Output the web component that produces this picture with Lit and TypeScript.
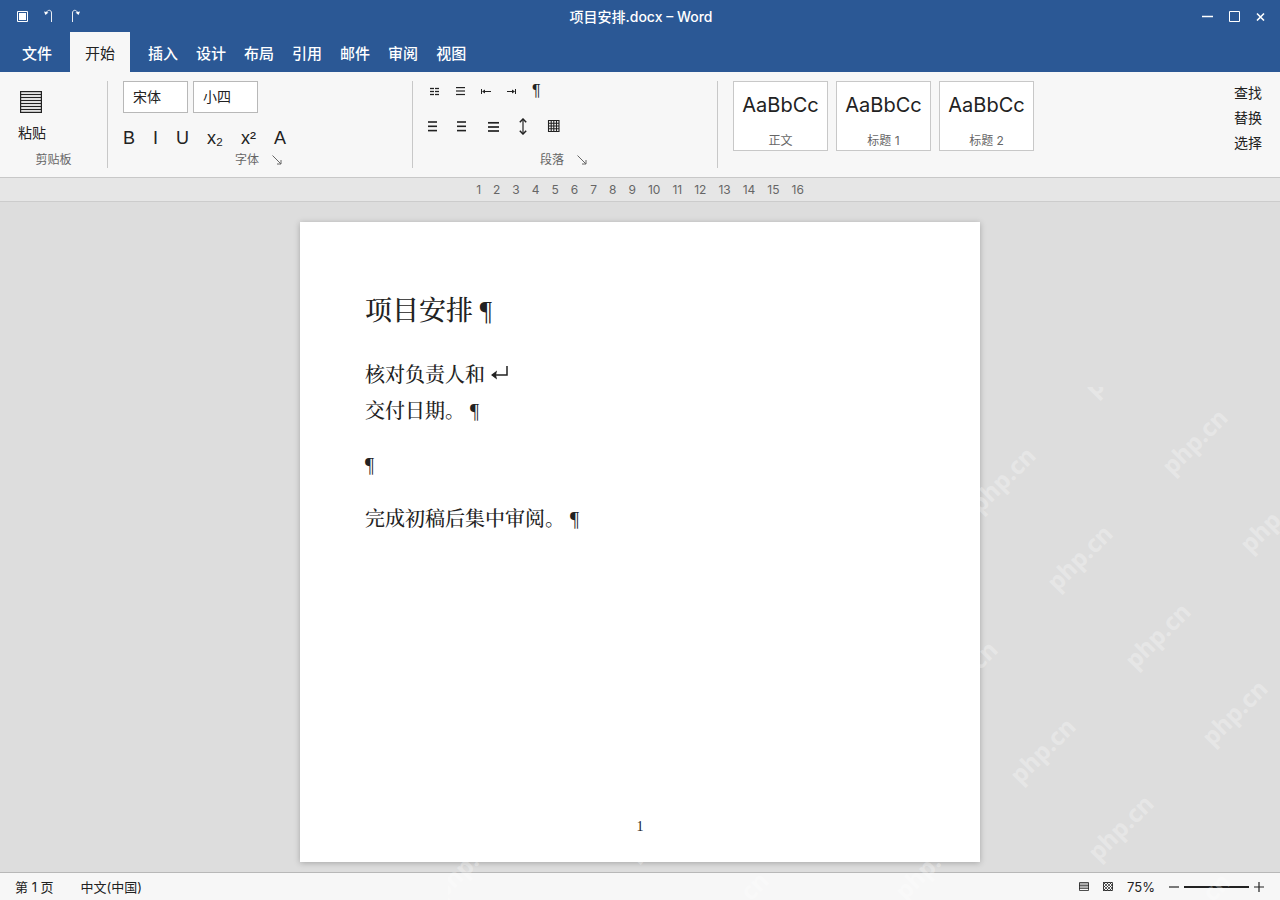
import { LitElement, html, css, svg } from "lit";
import { customElement, state } from "lit/decorators.js";

const TABS = ["文件", "开始", "插入", "设计", "布局", "引用", "邮件", "审阅", "视图"];
const STYLES = ["正文", "标题 1", "标题 2"];
const MARKS = ["B", "I", "U", "x₂", "x²", "A"];
const RULER = Array.from({ length: 16 }, (_, i) => i + 1);

/* Centres of the watermark stamps, relative to the overlay's corner. */
const STAMPS = [
  [670, -23], [747, 55], [825, 133],
  [555, 93], [632, 171], [710, 249], [787, 326],
  [517, 287], [595, 364], [673, 441], [750, 519],
  [480, 480], [288, 518], [210, 441], [18, 479],
];

const lines = (x: number, w: number, ys: number[], sw = 1) =>
  ys.map((y) => svg`<path d="M${x} ${y}h${w}" stroke="currentColor" stroke-width=${sw} fill="none"/>`);

const icon = (w: number, h: number, body: unknown) =>
  html`<svg class="icon" width=${w} height=${h} viewBox="0 0 ${w} ${h}" aria-hidden="true">${body}</svg>`;

const stroke = (d: string, sw = 1) =>
  svg`<path d=${d} stroke="currentColor" stroke-width=${sw} fill="none"/>`;
const fill = (d: string) => svg`<path d=${d} fill="currentColor"/>`;

const icons = {
  save: icon(11, 11, [stroke("M.5 .5h10v10h-10z"), fill("M2 2h7v7h-7z")]),
  undo: icon(10, 14, [stroke("M2 4C3.500 .4 7.500 .4 7.500 4V13", 0.9), fill("M0 2.500L4.500 3.500L1.500 6z")]),
  redo: icon(10, 14, [stroke("M8 4C6.500 .4 2.500 .4 2.500 4V13", 0.9), fill("M10 2.500L5.500 3.500L8.500 6z")]),
  minimize: icon(11, 11, stroke("M0 5.500h11", 1.5)),
  maximize: icon(11, 11, stroke("M.5 .5h10v10h-10z")),
  close: icon(9, 9, stroke("M1 1.500l7 7M8 1.500l-7 7", 1.6)),
  paste: icon(22, 22, [stroke("M.6 .6h20.800v20.800h-20.800z", 1.2), ...lines(1, 20, [3.5, 6.5, 9.5, 12.5, 15.5, 18.5], 1.2)]),
  bullets: icon(10, 9, [...lines(0, 4, [1.5, 4.5, 7.5], 1.3), ...lines(5, 4, [1.5, 4.5, 7.5], 1.3)]),
  numbers: icon(9, 9, lines(0, 9, [0.6, 4, 7.5], 1.2)),
  outdent: icon(10, 5, [stroke("M.5 0v5M2 2.500h8"), fill("M1 2.500l3-2v4z")]),
  indent: icon(9, 5, [stroke("M8.500 0v5M0 2.500h7"), fill("M8 2.500l-3-2v4z")]),
  left: icon(9, 11, lines(0, 9, [1, 5.3, 9.6], 1.6)),
  center: icon(10, 11, lines(0, 9, [1, 5.3, 9.6], 1.6)),
  justify: icon(12, 11, lines(1, 11, [1.8, 6, 10], 1.7)),
  spacing: icon(8, 17, [stroke("M4 2v13", 1.2), stroke("M.8 4.200L4 1l3.200 3.200M.8 12.800L4 16l3.200-3.200", 1.5)]),
  shading: icon(13, 12, stroke("M1.500 .5h10.500v11h-10.500zM4.200 0v12M6.800 0v12M9.500 0v12M1 3.200h11M1 6h11M1 8.800h11", 1.1)),
  launcher: icon(10, 10, stroke("M.5 .5L9 9M9 5v4h-4")),
  readView: icon(10, 9, [stroke("M.5 .5h9v8h-9z", 0.8), ...lines(0, 10, [2, 3.5, 5, 6.5], 0.7)]),
  webView: icon(10, 9, [
    stroke("M.5 .5h9v8h-9z", 0.8),
    stroke("M0 3L3 0M0 6L6 0M0 9L9 0M3 9L10 2M6 9L10 5M0 6L3 9M0 3L6 9M0 0L9 9M3 0L10 7M6 0L10 4", 0.7),
  ]),
  minus: icon(10, 10, stroke("M0 5h10", 1.2)),
  plus: icon(10, 10, stroke("M0 5h10M5 0v10", 1.2)),
  lineBreak: icon(18, 16, [stroke("M17 0v9H3", 1.5), fill("M1 9l6-4.500l-1 4.500l1 4.500z")]),
};

@customElement("app-root")
export class AppRoot extends LitElement {
  @state() private active = "开始";

  static styles = css`
    :host {
      display: flex;
      flex-direction: column;
      position: relative;
      min-height: 100vh;
      overflow: hidden;
      background: #ddd;
      color: #222;
      font: 14px/20px Inter, "Noto Sans CJK SC", sans-serif;
    }
    * { box-sizing: border-box; }
    button, select {
      font: inherit;
      color: inherit;
      background: none;
      border: 0;
      margin: 0;
      padding: 0;
    }
    .icon { display: block; flex: none; }
    .title-bar {
      display: grid;
      grid-template-columns: 1fr auto 1fr;
      align-items: center;
      height: 32px;
      padding: 0 15px 0 17px;
      background: #2b5895;
      color: #fff;
    }
    .title { margin: 0; font-size: 14px; font-weight: 500; padding-top: 2px; }
    .tools { display: flex; align-items: center; gap: 16px; }
    .tools.end { justify-content: flex-end; }
    .tabs {
      display: flex;
      gap: 18px;
      height: 40px;
      padding-left: 22px;
      background: #2b5895;
      color: #fff;
      font-size: 15px;
      font-weight: 500;
    }
    .tab { padding-top: 4px; }
    .tab.active { padding: 4px 15px 0; background: #f7f7f7; color: #222; font-weight: 400; }
    .ribbon {
      display: flex;
      height: 106px;
      padding: 9px 0;
      background: #f7f7f7;
      border-bottom: 1px solid #c8c8c8;
    }
    .group {
      display: flex;
      flex-direction: column;
      width: 305px;
      height: 87px;
      padding-left: 15px;
      border-right: 1px solid #c8c8c8;
    }
    .group.clipboard { width: 108px; padding-left: 18px; }
    .paste {
      display: flex;
      flex-direction: column;
      align-items: flex-start;
      gap: 10px;
      padding-top: 10px;
    }
    .paste .icon { margin-left: 2px; }
    .group-label {
      display: flex;
      align-items: center;
      justify-content: center;
      gap: 13px;
      margin: auto 0 0 -18px;
      color: #666;
      font-size: 12px;
      line-height: 16px;
    }
    .row { display: flex; align-items: center; }
    .combos { gap: 5px; }
    .combo {
      appearance: none;
      width: 65px;
      height: 32px;
      padding: 0 9px;
      background: #fff;
      border: 1px solid #b8b8b8;
    }
    .marks {
      gap: 18px;
      margin-top: 13px;
      font: 18px/24px "Liberation Sans", Inter, sans-serif;
    }
    .para-one { gap: 16px; padding-left: 2px; height: 20px; }
    .para-two { gap: 20px; height: 24px; margin-top: 13px; }
    .pilcrow { font: 16px/20px "Liberation Sans", sans-serif; }
    .styles { display: flex; gap: 8px; padding-left: 15px; }
    .style {
      display: flex;
      flex-direction: column;
      align-items: center;
      justify-content: space-between;
      width: 95px;
      height: 70px;
      padding: 10px 0 0;
      background: #fff;
      border: 1px solid #c8c8c8;
    }
    .sample { font-size: 20px; line-height: 26px; }
    .style-name { color: #666; font-size: 12px; line-height: 18px; }
    .editing {
      display: flex;
      flex-direction: column;
      gap: 5px;
      margin-left: auto;
      padding: 2px 18px 0 0;
    }
    .ruler {
      display: flex;
      justify-content: center;
      gap: 12px;
      height: 24px;
      background: #e6e6e6;
      border-bottom: 1px solid #ccc;
      color: #666;
      font-size: 12px;
      line-height: 24px;
    }
    .workspace { flex: 1; padding: 20px 20px 10px; }
    .page {
      display: flex;
      flex-direction: column;
      max-width: 680px;
      min-height: 640px;
      margin: 0 auto;
      padding: 65px 65px 25px;
      background: #fff;
      box-shadow: 0 1px 6px rgba(0, 0, 0, 0.25);
      font: 500 20px/36px "Liberation Serif", "Noto Serif CJK SC", "Noto Sans CJK SC", serif;
    }
    .page h1 { margin: 0 0 22px; font-size: 27px; line-height: 48px; font-weight: 500; }
    .page p { margin: 0 0 18px; }
    .page .icon { display: inline-block; }
    .page-number { margin-top: auto; text-align: center; font-size: 14px; line-height: 20px; }
    .status {
      display: flex;
      align-items: center;
      height: 28px;
      padding: 0 16px 0 15px;
      background: #f7f7f7;
      border-top: 1px solid #b8b8b8;
      font-size: 13px;
      gap: 27px;
    }
    .view { display: flex; align-items: center; gap: 14px; margin-left: auto; }
    .zoom { display: flex; align-items: center; gap: 5px; }
    .slider { appearance: none; width: 65px; height: 2px; margin: 0; background: #222; }
    .slider::-webkit-slider-thumb { appearance: none; width: 2px; height: 2px; background: #222; }
    .watermark {
      position: absolute;
      left: 35%;
      top: 43%;
      width: 65%;
      height: 57%;
      overflow: hidden;
      pointer-events: none;
      fill: rgba(255, 255, 255, 0.3);
      font: 700 24px "Noto Sans", sans-serif;
      text-anchor: middle;
    }
  `;

  private tool(label: string, content: unknown, cls = "") {
    return html`<button class=${cls} aria-label=${label}>${content}</button>`;
  }

  render() {
    return html`
      <header class="title-bar">
        <div class="tools">
          ${this.tool("保存", icons.save)}${this.tool("撤消", icons.undo)}${this.tool("恢复", icons.redo)}
        </div>
        <div class="title">项目安排.docx – Word</div>
        <div class="tools end">
          ${this.tool("最小化", icons.minimize)}${this.tool("最大化", icons.maximize)}${this.tool("关闭", icons.close)}
        </div>
      </header>
      <nav class="tabs">
        ${TABS.map((t) => html`<button class="tab ${t === this.active ? "active" : ""}"
          @click=${() => (this.active = t)}>${t}</button>`)}
      </nav>
      <section class="ribbon">
        <div class="group clipboard">
          <button class="paste">${icons.paste}<span>粘贴</span></button>
          <div class="group-label">剪贴板</div>
        </div>
        <div class="group">
          <div class="row combos">
            <select class="combo" aria-label="字体"><option>宋体</option></select>
            <select class="combo" aria-label="字号"><option>小四</option></select>
          </div>
          <div class="row marks">${MARKS.map((m) => html`<button>${m}</button>`)}</div>
          <div class="group-label">字体 ${this.tool("字体设置", icons.launcher)}</div>
        </div>
        <div class="group">
          <div class="row para-one">
            ${this.tool("项目符号", icons.bullets)}${this.tool("编号", icons.numbers)}
            ${this.tool("减少缩进", icons.outdent)}${this.tool("增加缩进", icons.indent)}
            ${this.tool("显示编辑标记", "¶", "pilcrow")}
          </div>
          <div class="row para-two">
            ${this.tool("左对齐", icons.left)}${this.tool("居中", icons.center)}
            ${this.tool("两端对齐", icons.justify)}${this.tool("行距", icons.spacing)}
            ${this.tool("底纹", icons.shading)}
          </div>
          <div class="group-label">段落 ${this.tool("段落设置", icons.launcher)}</div>
        </div>
        <div class="styles">
          ${STYLES.map((s) => html`<button class="style">
            <span class="sample">AaBbCc</span><span class="style-name">${s}</span>
          </button>`)}
        </div>
        <div class="editing"><button>查找</button><button>替换</button><button>选择</button></div>
      </section>
      <div class="ruler">${RULER.map((n) => html`<span>${n}</span>`)}</div>
      <main class="workspace">
        <article class="page">
          <h1>项目安排 ¶</h1>
          <p>核对负责人和 ${icons.lineBreak}<br />交付日期。 ¶</p>
          <p>¶</p>
          <p>完成初稿后集中审阅。 ¶</p>
          <div class="page-number">1</div>
        </article>
      </main>
      <footer class="status">
        <span>第 1 页</span><span>中文(中国)</span>
        <div class="view">
          ${this.tool("阅读视图", icons.readView)}${this.tool("Web 版式", icons.webView)}
          <span>75%</span>
          <div class="zoom">
            ${this.tool("缩小", icons.minus)}
            <input class="slider" type="range" aria-label="缩放" min="10" max="500" value="75" />
            ${this.tool("放大", icons.plus)}
          </div>
        </div>
      </footer>
      <svg class="watermark" aria-hidden="true">
        ${STAMPS.map(([x, y]) => svg`<text transform="translate(${x} ${y}) rotate(-45)" y="8">php.cn</text>`)}
      </svg>
    `;
  }
}
